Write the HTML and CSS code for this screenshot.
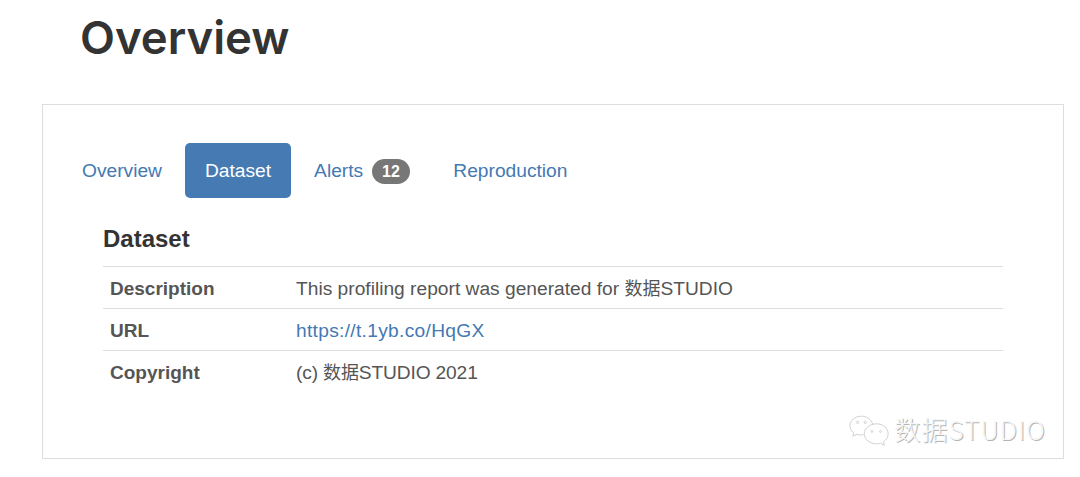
FILE: index.html
```html
<!DOCTYPE html>
<html lang="en">
<head>
    <meta charset="UTF-8">
    <meta name="viewport" content="width=device-width, initial-scale=1.0">
    <title>Overview</title>
    <link rel="stylesheet" href="styles.css">
</head>
<body>

<h1 class="page-title">Overview</h1>

<section class="panel">
    <nav class="tabs">
        <a href="#">Overview</a>
        <a href="#" class="active">Dataset</a>
        <a href="#">Alerts <span class="badge">12</span></a>
        <a href="#">Reproduction</a>
    </nav>

    <div class="tab-content">
        <h4>Dataset</h4>
        <table class="info-table">
            <tr>
                <th>Description</th>
                <td>This profiling report was generated for <span class="cjk">数据</span>STUDIO</td>
            </tr>
            <tr>
                <th>URL</th>
                <td><a href="#">https://t.1yb.co/HqGX</a></td>
            </tr>
            <tr>
                <th>Copyright</th>
                <td class="copyright">(c) <span class="cjk">数据</span>STUDIO 2021</td>
            </tr>
        </table>
    </div>

    <!-- watermark -->
    <div class="watermark">
        <svg width="42" height="31" viewBox="0 0 44 32" fill="none" stroke="#cfcfcf" stroke-width="1">
            <path d="M13 1C6 1 1 5.500 1 11c0 3 1.500 5.500 4 7.500L4 22l4.500-2c1.500.5 3 .7 4.500.7 1 0 1.500 0 2.500-.2"/>
            <path d="M25 9.500C23 4.500 18.500 1 13 1"/>
            <path d="M29 9c-7 0-13 4.500-13 10.500S22 30 29 30c1.300 0 2.700-.2 4-.6l4 2.100-1-3.700c3-2 5-4.800 5-8.300C41 13.500 36 9 29 9z"/>
            <circle cx="9" cy="7.500" r="1.200"/>
            <circle cx="17" cy="7.500" r="1.200"/>
            <circle cx="24" cy="17" r="1"/>
            <circle cx="33" cy="17" r="1"/>
        </svg>
        <span>数据STUDIO</span>
    </div>
</section>

</body>
</html>
```

FILE: styles.css
```css
body {
    font-family: "Liberation Sans", "Noto Sans CJK SC", sans-serif;
    font-size: 19.200px;
    color: #555;
    background-color: white;
    margin: 0;
    padding: 0 16px 18px 42px;
}
.page-title {
    font-family: Inter, "Liberation Sans", sans-serif;
    font-size: 45.500px;
    line-height: 58px;
    font-weight: 600;
    color: #333;
    margin: 0 0 0 38px;
    padding-top: 9px;
    height: 95px;
}
.panel {
    position: relative;
    box-sizing: border-box;
    border: 1px solid #ddd;
    height: 355px;
    padding: 38px 60px 0 30px;
}
.tabs {
    display: flex;
    align-items: center;
    height: 55px;
}
.tabs a {
    color: #4479b3;
    text-decoration: none;
    padding: 0 20px;
    margin-right: 3px;
    line-height: 55px;
    border-radius: 5px;
}
.tabs a:first-child {
    padding: 0 9px;
    margin-right: 14px;
}
.tabs a.active {
    background-color: #467ab3;
    color: white;
}
.badge {
    display: inline-block;
    background-color: #777;
    color: white;
    font-size: 16px;
    font-weight: bold;
    line-height: 25px;
    padding: 0 10.500px;
    border-radius: 13px;
    margin-left: 3px;
    vertical-align: 0;
}
.tab-content {
    padding-left: 30px;
}
.tab-content h4 {
    font-size: 24px;
    line-height: 28px;
    font-weight: bold;
    color: #333;
    margin: 27px 0 13px 0;
}
.info-table {
    width: 100%;
    border-collapse: collapse;
}
.info-table th, .info-table td {
    border-top: 1px solid #ddd;
    height: 42px;
    padding: 3px 7px 0 7px;
    box-sizing: border-box;
    text-align: left;
    vertical-align: baseline;
    line-height: 37px;
}
.info-table th {
    width: 186px;
    font-size: 19px;
    font-weight: bold;
}
.info-table a {
    color: #4479b3;
    text-decoration: none;
    letter-spacing: 0.300px;
}
.cjk {
    font-size: 18px;
}
.copyright {
    letter-spacing: -0.150px;
}
.watermark {
    position: absolute;
    top: 305px;
    right: 17px;
    display: flex;
    align-items: center;
    gap: 4px;
    font-family: "Noto Sans CJK SC", sans-serif;
    font-weight: 300;
    color: #f6f6f6;
    font-size: 26px;
    letter-spacing: 1px;
    text-shadow: 1px 1px 0 #b5b5b5;
}
.watermark svg {
    margin-top: 4px;
}
```
